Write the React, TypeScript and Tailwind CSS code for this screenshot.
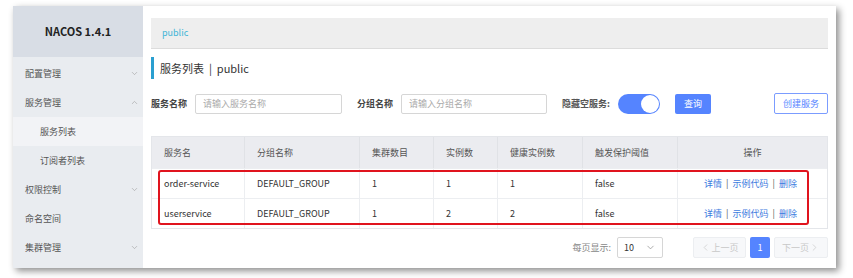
import { ChevronDown, ChevronUp, ChevronLeft, ChevronRight } from 'lucide-react'

const font = { fontFamily: '"Noto Sans CJK SC", "Noto Sans", sans-serif' }

const menu = [
  { label: '配置管理', icon: 'down' },
  { label: '服务管理', icon: 'up' },
  { label: '服务列表', sub: true, active: true },
  { label: '订阅者列表', sub: true },
  { label: '权限控制', icon: 'down' },
  { label: '命名空间' },
  { label: '集群管理', icon: 'down' }
]

const columns = [
  { title: '服务名', w: 'w-[93px]' },
  { title: '分组名称', w: 'w-[115px]' },
  { title: '集群数目', w: 'w-[74px]' },
  { title: '实例数', w: 'w-[64px]' },
  { title: '健康实例数', w: 'w-[85px]' },
  { title: '触发保护阈值', w: 'w-[95px]' },
  { title: '操作', w: 'flex-1', center: true }
]

const rows = [
  ['order-service', 'DEFAULT_GROUP', '1', '1', '1', 'false'],
  ['userservice', 'DEFAULT_GROUP', '1', '2', '2', 'false']
]

function Sidebar() {
  return (
    <div className="w-[130px] flex flex-col bg-[#e9ecf0]">
      <div className="h-[51px] flex items-center justify-center bg-[#d8dde5] text-[11px] font-bold text-[#222]">
        NACOS 1.4.1
      </div>
      <div className="flex flex-col pt-[2px]">
        {menu.map((m) => (
          <div
            key={m.label}
            className={`h-[29px] flex items-center justify-between text-[9px] text-[#555] pr-[4px] ${
              m.sub ? 'pl-[27px]' : 'pl-[12px]'
            } ${m.active ? 'bg-[#f2f3f6]' : ''}`}
          >
            <span>{m.label}</span>
            {m.icon === 'down' && <ChevronDown className="w-[9px] h-[9px] text-[#999]" strokeWidth={1.5} />}
            {m.icon === 'up' && <ChevronUp className="w-[9px] h-[9px] text-[#999]" strokeWidth={1.5} />}
          </div>
        ))}
      </div>
    </div>
  )
}

export default function App() {
  return (
    <div className="w-[853px] h-[278px] bg-white pl-[13px] pt-[6px]" style={font}>
      <div className="w-[823px] h-[262px] flex bg-white shadow-[3px_3px_7px_rgba(0,0,0,0.45)] overflow-hidden">
        <Sidebar />

        {/* Main */}
        <div className="flex-1 flex flex-col px-[8px] pt-[12px]">
          <div className="h-[31px] flex items-center pl-[11px] bg-[#eeeeee] border-b border-[#dcdcdc] text-[9px] text-[#3fb5d6]">
            public
          </div>

          <div className="mt-[8px] h-[22px] flex items-center border-l-[3px] border-[#2a9fd0] pl-[6px] text-[11px] text-[#333]">
            服务列表 &nbsp;|&nbsp; public
          </div>

          {/* Filters */}
          <div className="mt-[14px] flex items-center text-[9px]">
            <span className="font-bold text-[#444] w-[44px]">服务名称</span>
            <div className="w-[147px] h-[20px] border border-[#d6d6d6] rounded-[2px] flex items-center pl-[7px] text-[#aaa]">
              请输入服务名称
            </div>
            <span className="ml-[15px] font-bold text-[#444] w-[44px]">分组名称</span>
            <div className="w-[146px] h-[20px] border border-[#d6d6d6] rounded-[2px] flex items-center pl-[7px] text-[#aaa]">
              请输入分组名称
            </div>
            <span className="ml-[15px] font-bold text-[#555] w-[56px]">隐藏空服务:</span>
            <div className="w-[42px] h-[20px] rounded-full bg-[#5584ff] flex items-center justify-end pr-[1px]">
              <div className="w-[18px] h-[18px] rounded-full bg-white" />
            </div>
            <div className="ml-[15px] w-[36px] h-[20px] bg-[#5584ff] rounded-[2px] flex items-center justify-center text-white">
              查询
            </div>
            <div className="ml-auto w-[54px] h-[21px] border border-[#7b9cff] rounded-[2px] flex items-center justify-center text-[#5584ff]">
              创建服务
            </div>
          </div>

          {/* Table */}
          <div className="relative mt-[22px] border border-[#e4e6ea] text-[9px] text-[#333]">
            <div className="h-[31px] flex bg-[#ebecf0] text-[#555]">
              {columns.map((c, i) => (
                <div
                  key={c.title}
                  className={`${c.w} flex items-center ${c.center ? 'justify-center' : 'pl-[12px]'} ${
                    i < columns.length - 1 ? 'border-r border-[#e0e2e6]' : ''
                  }`}
                >
                  {c.title}
                </div>
              ))}
            </div>
            {rows.map((r, ri) => (
              <div key={ri} className="h-[30px] flex border-t border-[#eceef1]">
                {r.map((cell, ci) => (
                  <div
                    key={ci}
                    className={`${columns[ci].w} flex items-center pl-[12px] border-r border-[#eceef1]`}
                  >
                    {cell}
                  </div>
                ))}
                <div className="flex-1 flex items-center pl-[26px] text-[#3d7be0] gap-[4px]">
                  <span>详情</span>
                  <span className="text-[#555]">|</span>
                  <span>示例代码</span>
                  <span className="text-[#555]">|</span>
                  <span>删除</span>
                </div>
              </div>
            ))}
            {/* annotation */}
            <div className="absolute left-[6px] top-[33px] w-[651px] h-[55px] border-2 border-[#e0141e] rounded-[3px]" />
          </div>

          {/* Pagination */}
          <div className="mt-[8px] flex items-center justify-end text-[9px]">
            <span className="text-[#888] mr-[6px]">每页显示:</span>
            <div className="w-[46px] h-[21px] border border-[#d6d6d6] rounded-[2px] flex items-center justify-between px-[6px] text-[#333]">
              <span>10</span>
              <ChevronDown className="w-[11px] h-[11px] text-[#888]" strokeWidth={1.5} />
            </div>
            <div className="ml-[30px] w-[53px] h-[21px] border border-[#eceef1] bg-[#f7f8fa] rounded-[2px] flex items-center justify-center text-[#c8c8c8]">
              <ChevronLeft className="w-[11px] h-[11px]" strokeWidth={1.5} />
              上一页
            </div>
            <div className="ml-[4px] w-[20px] h-[21px] bg-[#5584ff] rounded-[2px] flex items-center justify-center text-white">
              1
            </div>
            <div className="ml-[4px] w-[54px] h-[21px] border border-[#eceef1] bg-[#f7f8fa] rounded-[2px] flex items-center justify-center text-[#c8c8c8]">
              下一页
              <ChevronRight className="w-[11px] h-[11px]" strokeWidth={1.5} />
            </div>
          </div>
        </div>
      </div>
    </div>
  )
}
